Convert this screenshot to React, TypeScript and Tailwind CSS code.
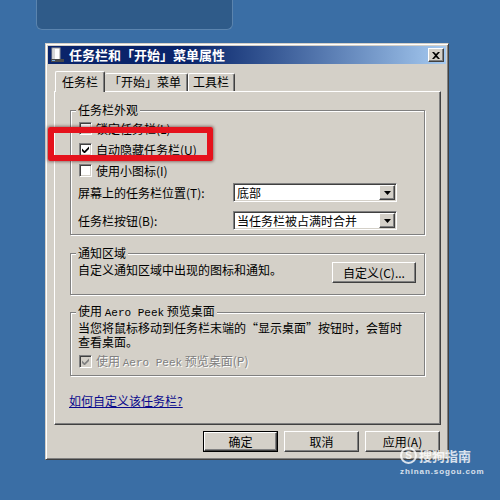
import type { ReactNode } from "react";

const raised =
  "border border-t-white border-l-white border-r-[#404040] border-b-[#404040] shadow-[inset_-1px_-1px_0_#808080]";
const sunken =
  "border border-t-[#808080] border-l-[#808080] border-r-white border-b-white shadow-[inset_1px_1px_0_#404040,inset_-1px_-1px_0_#d4d0c8]";

const Check = ({ checked, disabled }: { checked?: boolean; disabled?: boolean }) => (
  <span
    className={`flex h-[13px] w-[13px] shrink-0 items-center justify-center ${sunken} ${
      disabled ? "bg-[#d4d0c8]" : "bg-white"
    }`}
  >
    {checked && (
      <svg width="7" height="7" viewBox="0 0 7 7">
        <path d="M0 2.5L2.5 5L7 0.5V3L2.5 7.5L0 5Z" fill={disabled ? "#808080" : "#000"} />
      </svg>
    )}
  </span>
);

const Group = ({ title, className, children }: { title: ReactNode; className?: string; children: ReactNode }) => (
  <fieldset
    className={`border border-[#808080] px-[7px] shadow-[inset_1px_1px_0_#fff,1px_1px_0_#fff] ${className ?? ""}`}
  >
    <legend className="-ml-[2px] bg-[#d4d0c8] px-[2px] leading-[16px]">{title}</legend>
    {children}
  </fieldset>
);

const Select = ({ value }: { value: string }) => (
  <div className={`flex h-[19px] w-[164px] items-center bg-white ${sunken} p-[1px]`}>
    <span className="flex-1 pl-[2px] leading-[15px]">{value}</span>
    <span className={`flex h-full w-[16px] items-center justify-center bg-[#d4d0c8] ${raised}`}>
      <svg width="7" height="4" viewBox="0 0 7 4">
        <path d="M0 0H7L3.5 4Z" fill="#000" />
      </svg>
    </span>
  </div>
);

const Button = ({ label, primary }: { label: string; primary?: boolean }) => {
  const inner = (
    <span className={`flex h-full w-full items-center justify-center bg-[#d4d0c8] ${raised}`}>{label}</span>
  );
  return primary ? (
    <span className="flex h-[21px] w-[75px] border border-black">{inner}</span>
  ) : (
    <span className="flex h-[21px] w-[75px]">{inner}</span>
  );
};

const Mono = ({ children }: { children: ReactNode }) => (
  <span className="font-['Liberation_Mono'] text-[11px]">{children}</span>
);

const Cjk = ({ children }: { children: ReactNode }) => (
  <span className="font-['Noto_Sans_CJK_SC']">{children}</span>
);

export default function App() {
  return (
    <div className="relative h-[500px] w-[500px] overflow-hidden bg-[#3a6ea5] font-['Noto_Sans_CJK_SC',sans-serif] text-[12px] text-black">
      {/* window behind */}
      <div className="ml-[36px] h-[30px] w-[197px] rounded-b-[6px] border border-t-0 border-[#5b84ae] bg-[#2f5b89]" />

      {/* dialog */}
      <div className="mt-[13px] ml-[45px] flex h-[417px] w-[404px] flex-col border border-t-[#d4d0c8] border-l-[#d4d0c8] border-r-[#404040] border-b-[#404040] bg-[#d4d0c8] p-[2px] shadow-[inset_1px_1px_0_#fff,inset_-1px_-1px_0_#808080]">
        {/* title bar */}
        <div className="flex h-[18px] items-center bg-linear-to-r from-[#0a246a] from-35% to-[#a6caf0] pl-[2px] pr-[2px]">
          <svg width="16" height="16" viewBox="0 0 16 16">
            <rect x="2" y="1" width="8" height="12" fill="#fff" stroke="#9a9a9a" />
            <rect x="3" y="2" width="2" height="10" fill="#d8d8d8" />
            <rect x="1" y="12" width="13" height="3" fill="#4a4a4a" />
            <rect x="2" y="13" width="3" height="1" fill="#7ab0e0" />
          </svg>
          <span className="ml-[3px] text-[13px] leading-[18px] font-bold text-white">任务栏和「开始」菜单属性</span>
          <span className={`ml-auto flex h-[14px] w-[16px] items-center justify-center bg-[#d4d0c8] ${raised}`}>
            <svg width="8" height="7" viewBox="0 0 8 7">
              <path d="M0 0H2L4 2L6 0H8L5 3.5L8 7H6L4 5L2 7H0L3 3.5Z" fill="#000" />
            </svg>
          </span>
        </div>

        {/* tabs */}
        <div className="mt-[7px] ml-[7px] flex h-[20px] items-end">
          <div className="relative z-10 -mb-[1px] h-[21px] w-[50px] rounded-t-[2px] border-t border-l border-r border-t-white border-l-white border-r-[#404040] bg-[#d4d0c8] pt-[2px] pl-[6px] leading-[16px] shadow-[inset_-1px_0_0_#808080]">
            任务栏
          </div>
          <div className="h-[18px] w-[83px] rounded-t-[2px] border-t border-r border-t-white border-r-[#404040] pl-[4px] leading-[16px] shadow-[inset_-1px_0_0_#808080]">
            「开始」菜单
          </div>
          <div className="h-[18px] w-[47px] rounded-t-[2px] border-t border-l border-r border-t-white border-l-white border-r-[#404040] pl-[4px] leading-[16px] shadow-[inset_-1px_0_0_#808080]">
            工具栏
          </div>
        </div>

        {/* panel */}
        <div className={`ml-[6px] flex h-[334px] w-[387px] flex-col px-[15px] pt-[10px] ${raised}`}>
          <Group title="任务栏外观" className="pb-[4px]">
            <div className="flex h-[21px] items-center gap-[4px] pl-[1px]">
              <Check />
              <span>锁定任务栏(L)</span>
            </div>
            <div className="flex h-[21px] items-center gap-[4px] pl-[1px]">
              <Check checked />
              <span>自动隐藏任务栏(U)</span>
            </div>
            <div className="flex h-[21px] items-center gap-[4px] pl-[1px]">
              <Check />
              <span>使用小图标(I)</span>
            </div>
            <div className="mt-[2px] flex items-center">
              <span className="w-[155px]">屏幕上的任务栏位置(T):</span>
              <Select value="底部" />
            </div>
            <div className="mt-[9px] flex items-center">
              <span className="w-[155px]">任务栏按钮(B):</span>
              <Select value="当任务栏被占满时合并" />
            </div>
          </Group>

          <Group title="通知区域" className="mt-[10px] pb-[11px]">
            <div className="flex items-start justify-between">
              <span className="mt-[1px] leading-[16px]">自定义通知区域中出现的图标和通知。</span>
              <span className="mt-[1px] mr-[1px] flex h-[21px] w-[84px]">
                <span className={`flex h-full w-full items-center justify-center bg-[#d4d0c8] ${raised}`}>
                  自定义(C)...
                </span>
              </span>
            </div>
          </Group>

          <Group
            title={
              <>
                使用 <Mono>Aero Peek</Mono> 预览桌面
              </>
            }
            className="mt-[8px] pb-[7px]"
          >
            <p className="font-['Liberation_Sans','Noto_Sans_CJK_SC',sans-serif] leading-[14px]">
              当您将鼠标移动到任务栏末端的<Cjk>“</Cjk>显示桌面<Cjk>”</Cjk>按钮时，会暂时
              <br />
              查看桌面。
            </p>
            <div className="mt-[5px] flex h-[13px] items-center gap-[4px] pl-[1px] text-[#808080] [text-shadow:1px_1px_0_#fff]">
              <Check checked disabled />
              <span>
                使用 <Mono>Aero Peek</Mono> 预览桌面(P)
              </span>
            </div>
          </Group>

          <a className="mt-[18px] -ml-[1px] self-start leading-[14px] text-[#0a0a8c] underline">如何自定义该任务栏?</a>
        </div>

        {/* buttons */}
        <div className="mt-[6px] ml-[6px] flex w-[387px] justify-end gap-[6px] pr-[1px]">
          <Button label="确定" primary />
          <Button label="取消" />
          <Button label="应用(A)" />
        </div>
      </div>

      {/* annotation */}
      <div className="absolute top-[127px] left-[48px] h-[34px] w-[165px] rounded-[2px] border-[6px] border-[#e5121c] shadow-[0_0_3px_1px_rgba(60,0,0,0.45)]" />

      {/* watermark */}
      <div className="absolute top-[447px] left-[400px] flex flex-col items-start whitespace-nowrap text-white/80">
        <div className="flex items-center gap-[2px]">
          <span className="flex h-[17px] w-[17px] items-center justify-center rounded-full border-2 border-white/80 font-['Liberation_Sans'] text-[10px] leading-[10px] font-bold">
            S
          </span>
          <span className="text-[13px] leading-[17px] font-bold">搜狗指南</span>
        </div>
        <span className="mt-[3px] font-['Liberation_Sans'] text-[8px] leading-[10px] font-bold tracking-[0.9px]">
          zhinan.sogou.com
        </span>
      </div>
    </div>
  );
}
